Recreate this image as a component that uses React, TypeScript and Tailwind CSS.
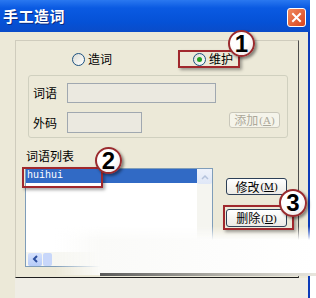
import React from "react"

const cjk = "font-['Noto_Sans_CJK_SC','Noto_Sans_CJK_SC',sans-serif]"

function Radio({ checked, label }: { checked?: boolean; label: string }) {
  return (
    <div className="flex items-center gap-[3px]">
      <span className="w-[13px] h-[13px] rounded-full border border-[#1c5180] bg-[linear-gradient(135deg,#dcdcd4,#ffffff)] flex items-center justify-center">
        {checked && <span className="w-[5px] h-[5px] rounded-full bg-[#21a121]" />}
      </span>
      <span className="text-[12px] leading-none text-black">{label}</span>
    </div>
  )
}

function XpButton({ text, hot, disabled, className }: { text: string; hot: string; disabled?: boolean; className?: string }) {
  return (
    <div
      className={`flex items-center justify-center rounded-[3px] border text-[12px] leading-none ${
        disabled
          ? "border-[#c9c7ba] bg-[#f5f4ea] text-[#aca899]"
          : "border-[#2c3f56] bg-[linear-gradient(#ffffff,#ecebe6)] text-black"
      } ${className ?? ""}`}
    >
      {text}
      <span className="font-['Liberation_Serif',serif] text-[11px] ml-[1px]">
        (<span className="underline">{hot}</span>)
      </span>
    </div>
  )
}

function Badge({ n, className }: { n: string; className: string }) {
  return (
    <div
      className={`absolute rounded-full border-2 border-[#9a2b2e] bg-[radial-gradient(circle_at_40%_30%,#ffffff_45%,#e6e0e0)] shadow-[2px_2px_3px_rgba(0,0,0,0.45)] flex items-center justify-center font-['Liberation_Sans',sans-serif] font-bold text-[24px] leading-none text-black ${className}`}
    >
      {n}
    </div>
  )
}

function RedBox({ className }: { className: string }) {
  return (
    <div
      className={`absolute border-2 border-[#a0282d] shadow-[2px_2px_3px_rgba(0,0,0,0.35)] ${className}`}
    />
  )
}

export default function App() {
  return (
    <div className={`relative w-[316px] h-[298px] overflow-hidden bg-white ${cjk}`}>
      <div className="w-[310px] h-full flex flex-col">
        {/* title bar */}
        <div className="h-[32px] flex items-center justify-between pl-[3px] pr-[4px] bg-[linear-gradient(#2a78f0_0%,#0a5ae2_25%,#0551d6_70%,#0a4cc8_100%)]">
          <span className="text-[15px] font-bold text-white [text-shadow:1px_1px_0_#0a2a80] tracking-[0.5px]">
            手工造词
          </span>
          <div className="w-[19px] h-[19px] mt-[3px] rounded-[3px] border border-white bg-[linear-gradient(135deg,#f08a5e,#d8441e)] flex items-center justify-center">
            <svg width="11" height="11" viewBox="0 0 11 11">
              <path d="M2 2 L9 9 M9 2 L2 9" stroke="white" strokeWidth="2" strokeLinecap="square" />
            </svg>
          </div>
        </div>

        {/* body */}
        <div className="flex-1 bg-[#ece9d8] border-r-2 border-[#0c3bb8] pl-[15px] pt-[8px]">
          <div className="w-[284px] h-[238px] border border-t-[#cfccbd] border-l-[#cfccbd] border-r-[#4d4d4d] border-b-[#1e1e1e] bg-[#ece9d8]">
            {/* radios */}
            <div className="mt-[9px] h-[18px] flex items-center pl-[56px]">
              <Radio label="造词" />
              <div className="ml-[81px]">
                <Radio checked label="维护" />
              </div>
            </div>

            {/* inner group */}
            <div className="ml-[12px] mt-[7px] w-[260px] h-[63px] rounded-[3px] border border-[#d0d0bf] pl-[4px] pt-[7px]">
              <div className="flex items-center h-[20px]">
                <span className="w-[34px] text-[12px] leading-none text-black">词语</span>
                <div className="w-[149px] h-[20px] border border-[#a0a8b0] bg-[#ebe9e0]" />
              </div>
              <div className="flex items-start mt-[9px]">
                <span className="w-[34px] h-[21px] flex items-center text-[12px] leading-none text-black">外码</span>
                <div className="w-[75px] h-[21px] border border-[#a0a8b0] bg-[#ebe9e0]" />
                <XpButton text="添加" hot="A" disabled className="ml-[87px] w-[51px] h-[16px]" />
              </div>
            </div>

            {/* list label */}
            <div className="ml-[10px] mt-[12px] text-[12px] leading-none text-black">词语列表</div>

            <div className="flex mt-[6px] ml-[9px]">
              {/* list box */}
              <div className="w-[188px] h-[99px] border border-[#7f9db9] bg-white flex">
                <div className="flex-1 flex flex-col">
                  <div className="h-[14px] bg-[#316ac5] text-white font-['Liberation_Mono',monospace] text-[10px] leading-[14px] pl-[1px]">
                    huihui
                  </div>
                  <div className="flex-1" />
                  <div className="h-[14px] flex items-center pl-[2px] bg-[#f7f7f2]">
                    <div className="w-[14px] h-[13px] rounded-[2px] bg-[linear-gradient(#d6e2fd,#b6cbf8)] flex items-center justify-center">
                      <svg width="7" height="8" viewBox="0 0 7 8">
                        <path d="M5 1 L2 4 L5 7" stroke="#2d4f9e" strokeWidth="2" fill="none" />
                      </svg>
                    </div>
                    <div className="ml-[1px] w-[9px] h-[13px] rounded-[2px] bg-[#c8d7fa]" />
                  </div>
                </div>
                <div className="w-[15px] flex flex-col bg-[#f5f5f0]">
                  <div className="h-[15px] rounded-[2px] bg-[linear-gradient(#eef2fb,#dfe7f7)] flex items-center justify-center">
                    <svg width="8" height="6" viewBox="0 0 8 6">
                      <path d="M1 5 L4 2 L7 5" stroke="#b4c2dc" strokeWidth="1.5" fill="none" />
                    </svg>
                  </div>
                </div>
              </div>

              {/* buttons */}
              <div className="ml-[13px] flex flex-col">
                <XpButton text="修改" hot="M" className="mt-[10px] w-[61px] h-[17px]" />
                <XpButton text="删除" hot="D" className="mt-[14px] w-[61px] h-[18px]" />
              </div>
            </div>
          </div>
          <div className="h-[20px] bg-[#efede5]" />
        </div>
      </div>

      {/* torn paper fade at the bottom */}
      <div className="absolute left-[55px] top-[226px] w-[261px] h-[49px] bg-[linear-gradient(to_right,rgba(255,255,255,0)_0px,#fafaf8_45px,#ffffff_100%)] [mask-image:linear-gradient(to_bottom,transparent_0px,black_14px)]" />
      <div className="absolute left-[100px] top-[273px] w-[216px] h-[3px] bg-[linear-gradient(to_right,#5a5a5a,#b8b6ae_60%,#e8e6de)]" />

      {/* annotations */}
      <RedBox className="left-[178px] top-[50px] w-[62px] h-[18px]" />
      <RedBox className="left-[22px] top-[167px] w-[81px] h-[21px]" />
      <RedBox className="left-[223px] top-[205px] w-[71px] h-[25px]" />
      <Badge n="1" className="left-[228px] top-[30px] w-[27px] h-[27px]" />
      <Badge n="2" className="left-[95px] top-[147px] w-[27px] h-[27px]" />
      <Badge n="3" className="left-[279px] top-[189px] w-[28px] h-[28px]" />
    </div>
  )
}
